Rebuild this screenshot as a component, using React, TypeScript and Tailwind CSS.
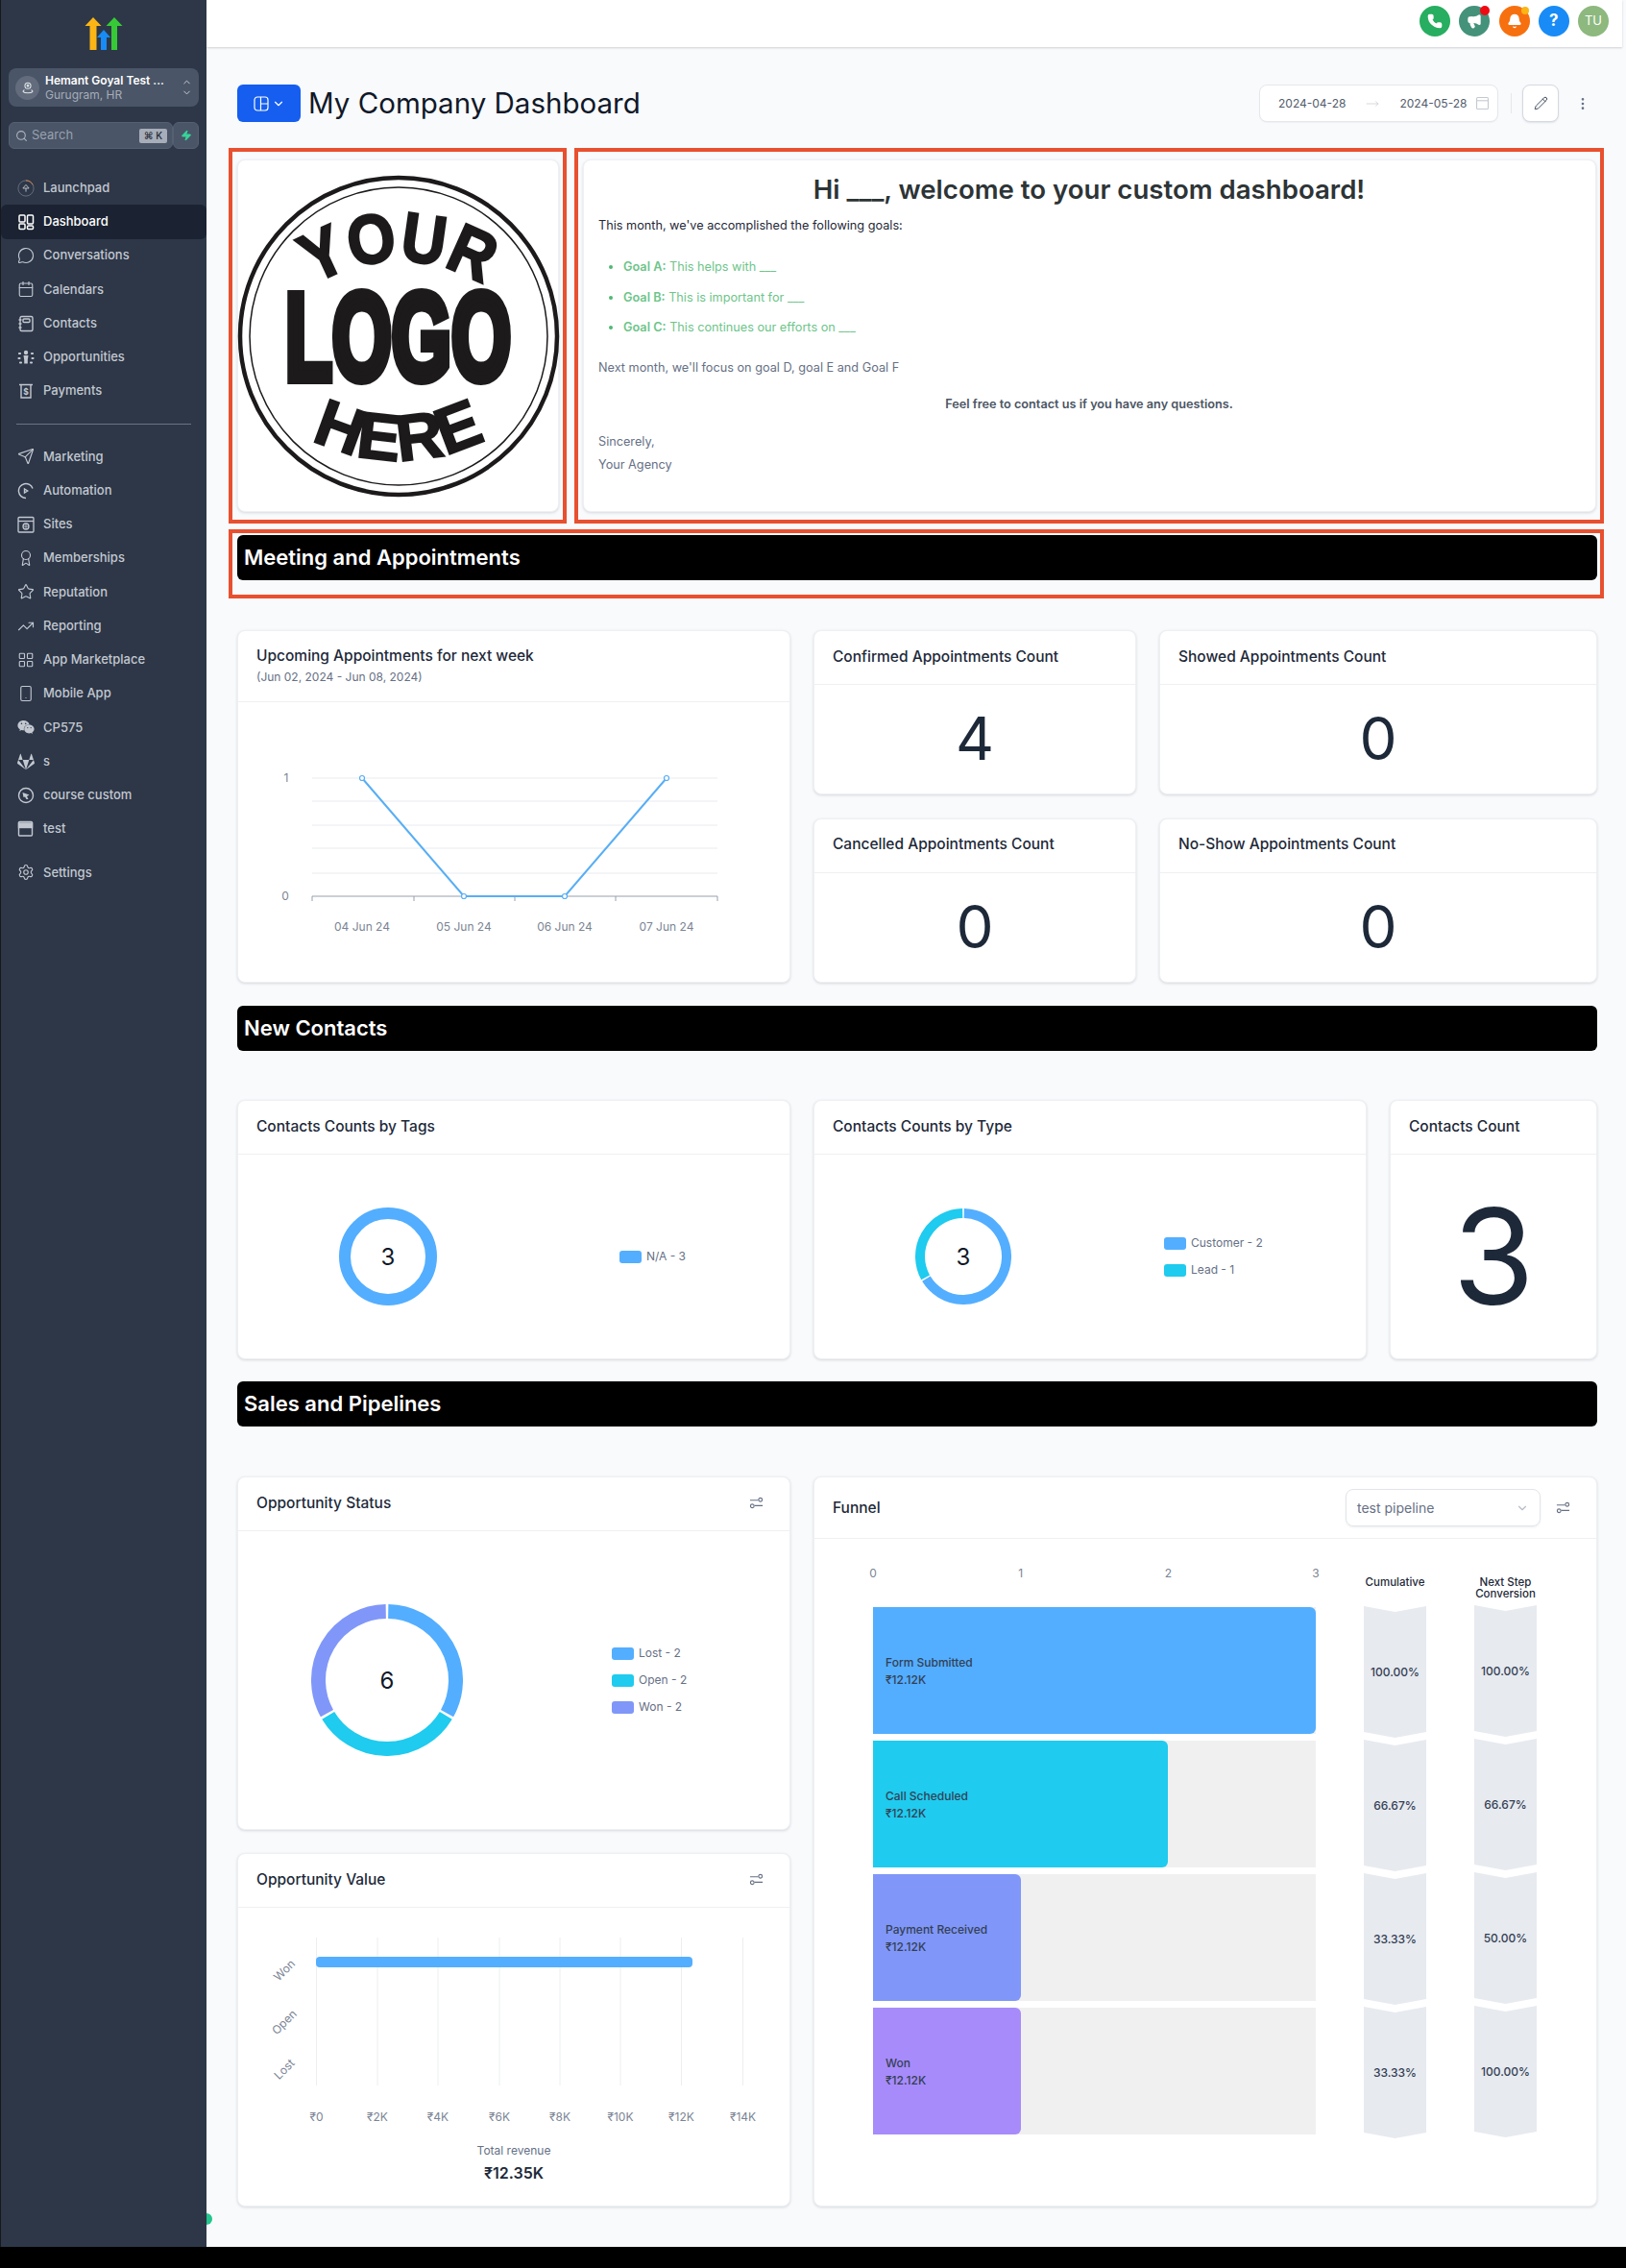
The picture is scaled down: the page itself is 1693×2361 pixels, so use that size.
import React from "react";
import {
  Bell,
  Calendar,
  ChevronDown,
  ChevronUp,
  LayoutGrid,
  MessageCircle,
  MoreVertical,
  Pencil,
  Phone,
  Search,
  Send,
  Settings,
  Smartphone,
  Star,
  TrendingUp,
  Award,
  Megaphone,
  MoveRight,
  Zap,
} from "lucide-react";
import { FaGitlab, FaWeixin } from "react-icons/fa";

const ic = "w-[18px] h-[18px]";

// hand drawn sidebar icons, the ones lucide has no close match for
const LaunchIcon = () => (
  <svg viewBox="0 0 20 20" className="w-5 h-5" fill="none" strokeWidth="1">
    <circle cx="10" cy="10" r="9" stroke="#6b7280" />
    <path d="M10 1a9 9 0 0 1 8 5" stroke="#e08a4a" />
    <path d="M10 14v-4M6.5 10 10 6l3.5 4z" stroke="#c5cad3" />
  </svg>
);
const DashIcon = () => (
  <svg viewBox="0 0 18 18" className={ic} fill="none" stroke="currentColor" strokeWidth="1.5">
    <rect x="2" y="2" width="6" height="7" rx="1" />
    <rect x="10.5" y="2" width="6" height="9" rx="1" />
    <rect x="2" y="11" width="6" height="5.5" rx="1" />
    <rect x="10.5" y="13" width="6" height="3.5" rx="1" />
  </svg>
);
const ContactIcon = () => (
  <svg viewBox="0 0 18 18" className={ic} fill="none" stroke="currentColor" strokeWidth="1.4">
    <rect x="3" y="1.5" width="13" height="15" rx="1.5" />
    <rect x="6" y="4" width="7" height="3.5" rx="1" />
    <path d="M1.5 5h3M1.5 9h3M1.5 13h3" />
  </svg>
);
const OppIcon = () => (
  <svg viewBox="0 0 18 18" className={ic} fill="currentColor">
    <circle cx="9" cy="4" r="2.2" />
    <path d="M6.5 7h5l-.7 4.5v4H7.200v-4z" />
    <rect x="1" y="4" width="3" height="2" rx=".8" />
    <rect x="14" y="4" width="3" height="2" rx=".8" />
    <rect x="0.500" y="9" width="3" height="2" rx=".8" />
    <rect x="14.500" y="9" width="3" height="2" rx=".8" />
    <rect x="2" y="13.500" width="3" height="2" rx=".8" />
    <rect x="13" y="13.500" width="3" height="2" rx=".8" />
  </svg>
);
const PayIcon = () => (
  <svg viewBox="0 0 18 18" className={ic} fill="none" stroke="currentColor" strokeWidth="1.4">
    <path d="M2 2.500h14M4 2.500v13.500h10V2.500" />
    <text x="9" y="13" textAnchor="middle" fontSize="8.500" fontWeight="700" fill="currentColor" stroke="none">
      $
    </text>
  </svg>
);
const AutoIcon = () => (
  <svg viewBox="0 0 18 18" className={ic} fill="none" stroke="currentColor" strokeWidth="1.4">
    <path d="M16 6.500A7.500 7.500 0 1 0 9 16.500" />
    <path d="M7.500 7v4l3.200-2z" />
  </svg>
);
const SiteIcon = () => (
  <svg viewBox="0 0 18 18" className={ic} fill="none" stroke="currentColor" strokeWidth="1.3">
    <rect x="1" y="1.500" width="16" height="15.500" rx="1" />
    <path d="M1 5.500h16" />
    <circle cx="9" cy="11" r="3" />
    <path d="M6 11h6M9 8v6" strokeWidth=".8" />
  </svg>
);
const CourseIcon = () => (
  <svg viewBox="0 0 18 18" className={ic} fill="none" stroke="currentColor" strokeWidth="1.4">
    <circle cx="9" cy="9" r="7.500" />
    <path d="M5.500 6 12.500 8.500 10 10l1.500 3L9.500 13 8 10.500 6.500 11z" fill="currentColor" stroke="none" />
  </svg>
);
const TestIcon = () => (
  <svg viewBox="0 0 18 18" className={ic} fill="none" stroke="currentColor" strokeWidth="1.4">
    <rect x="1.500" y="1.500" width="14" height="14.500" rx="1" />
    <rect x="1.500" y="3" width="14" height="4.500" fill="currentColor" />
  </svg>
);

const topNav: [string, React.ReactNode][] = [
  ["Launchpad", <LaunchIcon />],
  ["Dashboard", <DashIcon />],
  ["Conversations", <MessageCircle className={ic} strokeWidth={1.5} />],
  ["Calendars", <Calendar className={ic} strokeWidth={1.5} />],
  ["Contacts", <ContactIcon />],
  ["Opportunities", <OppIcon />],
  ["Payments", <PayIcon />],
];
const lowerNav: [string, React.ReactNode][] = [
  ["Marketing", <Send className={ic} strokeWidth={1.5} />],
  ["Automation", <AutoIcon />],
  ["Sites", <SiteIcon />],
  ["Memberships", <Award className={ic} strokeWidth={1.5} />],
  ["Reputation", <Star className={ic} strokeWidth={1.5} />],
  ["Reporting", <TrendingUp className={ic} strokeWidth={1.5} />],
  ["App Marketplace", <LayoutGrid className={ic} strokeWidth={1.5} />],
  ["Mobile App", <Smartphone className={ic} strokeWidth={1.5} />],
  ["CP575", <FaWeixin className={ic} />],
  ["s", <FaGitlab className={ic} />],
  ["course custom", <CourseIcon />],
  ["test", <TestIcon />],
];

const NavItem = ({ label, icon }: { label: string; icon: React.ReactNode }) => {
  const active = label === "Dashboard";
  return (
    <div
      className={`h-[35.25px] flex items-center pl-[17px] gap-[9px] text-[13px] font-medium rounded-md ${
        active ? "bg-[#1b2332] text-white" : "text-[#c3c8d0]"
      }`}
    >
      <span className="w-[18px] flex justify-center">{icon}</span>
      {label}
    </div>
  );
};

const Sidebar = () => (
  <aside className="relative w-[215px] shrink-0 bg-[#2d3748] border-l border-[#16181d] flex flex-col">
    <div className="h-[71px] flex justify-center pt-[18px]">
      <svg viewBox="0 0 40 34" className="w-[40px] h-[34px]">
        <path d="M9 0l8.500 9H12.500v25h-7V9H.5z" fill="#fbb515" />
        <path d="M31 0l8.500 9H34v25h-6V9h-5.500z" fill="#37ca37" />
        <path d="M20 13l7 8h-4v13h-6V21h-4z" fill="#188bf6" />
      </svg>
    </div>
    <div className="mx-2 h-[40px] rounded-lg bg-[#4a5567] flex items-center pl-[7px]">
      <div className="w-[25px] h-[25px] rounded-full bg-[#626c7c] flex items-center justify-center">
        <svg viewBox="0 0 16 16" className="w-[14px] h-[14px]" fill="none" stroke="#e5e7eb" strokeWidth="1.200">
          <circle cx="8" cy="6" r="3.500" />
          <circle cx="8" cy="6" r="1" />
          <path d="M4 11c-3 1.500-2 3.500 4 3.500s7-2 4-3.500" />
        </svg>
      </div>
      <div className="ml-[6px] flex-1 min-w-0">
        <div className="text-[12px] leading-[15px] font-semibold text-white">Hemant Goyal Test ...</div>
        <div className="text-[12px] leading-[15px] text-[#a6adb9]">Gurugram, HR</div>
      </div>
      <div className="mr-[7px] flex flex-col text-[#d1d5db]">
        <ChevronUp className="w-[11px] h-[11px]" />
        <ChevronDown className="w-[11px] h-[11px]" />
      </div>
    </div>
    <div className="mx-2 mt-4 h-[28px] flex">
      <div className="flex-1 rounded-md bg-[#4a5567] border border-[#556072] flex items-center pl-[6px]">
        <Search className="w-[13px] h-[13px] text-[#b0b6c0]" />
        <span className="ml-[4px] text-[13px] text-[#98a1ae] flex-1">Search</span>
        <span className="mr-[5px] h-[15px] w-[29px] rounded-[2px] bg-[#a7aeb9] text-[10px] font-medium text-[#1f2937] flex items-center justify-center">
          ⌘ K
        </span>
      </div>
      <div className="w-[27px] rounded-md bg-[#4a5567] border border-[#556072] flex items-center justify-center">
        <Zap className="w-[12px] h-[12px] text-[#37d399] fill-[#37d399]" />
      </div>
    </div>
    <nav className="mt-[23px] pr-0">
      {topNav.map(([label, icon]) => (
        <NavItem key={label} label={label} icon={icon} />
      ))}
    </nav>
    <div className="mx-4 mt-[16px] mb-[16px] h-px bg-[#6b7482]" />
    <nav>
      {lowerNav.map(([label, icon]) => (
        <NavItem key={label} label={label} icon={icon} />
      ))}
      <div className="mt-[10px]">
        <NavItem label="Settings" icon={<Settings className={ic} strokeWidth={1.5} />} />
      </div>
    </nav>
    <div className="absolute -right-[6px] bottom-[23px] w-[6px] h-[12px] rounded-r-full bg-[#22c58b]" />
  </aside>
);

const TopBar = () => (
  <div className="h-[49px] pb-[5px] mr-[4px] bg-white shadow-[0_1px_2px_rgba(16,24,40,0.18)] flex items-center justify-end pr-[14px] gap-[9.25px]">
    <div className="w-8 h-8 rounded-full bg-[#27ae60] flex items-center justify-center">
      <Phone className="w-4 h-4 text-white fill-white" />
    </div>
    <div className="relative w-8 h-8 rounded-full bg-[#44927a] flex items-center justify-center">
      <Megaphone className="w-4 h-4 text-white fill-white" />
      <span className="absolute right-0 top-0 w-[10px] h-[10px] rounded-full bg-[#ef0a12]" />
    </div>
    <div className="relative w-8 h-8 rounded-full bg-[#f7700f] flex items-center justify-center">
      <Bell className="w-4 h-4 text-white fill-white" />
      <span className="absolute right-[1px] top-[1px] w-[8px] h-[8px] rounded-full bg-[#fbb515]" />
    </div>
    <div className="w-8 h-8 rounded-full bg-[#188bf6] flex items-center justify-center text-white text-[17px] font-bold">?</div>
    <div className="w-8 h-8 rounded-full bg-[#8db87e] flex items-center justify-center text-white text-[13px]">TU</div>
  </div>
);

const TitleRow = () => (
  <div className="h-[39px] mt-[39px] flex items-center">
    <div className="w-[66px] h-[39px] rounded-md bg-[#155eef] flex items-center justify-center gap-[3px] text-white">
      <svg viewBox="0 0 16 16" className="w-4 h-4" fill="none" stroke="currentColor" strokeWidth="1.200">
        <rect x="1" y="1" width="14" height="14" rx="3" />
        <path d="M7.500 1v14M7.500 8H15" />
      </svg>
      <ChevronDown className="w-[14px] h-[14px]" />
    </div>
    <h1 className="ml-2 text-[29.5px] font-normal text-[#101828]">My Company Dashboard</h1>
    <div className="ml-auto w-[249px] h-[39px] rounded-lg bg-white border border-[#e5e7eb] shadow-[0_1px_1px_rgba(16,24,40,0.04)] flex items-center pl-[19px] text-[12px] whitespace-nowrap text-[#525c6b]">
      <span>2024-04-28</span>
      <MoveRight className="w-[14px] h-[14px] mx-[21px] text-[#c4c9d0]" strokeWidth={1.200} />
      <span>2024-05-28</span>
      <svg viewBox="0 0 12 12" className="ml-[9px] w-[13px] h-[13px]" fill="none" stroke="#c4c9d0">
        <rect x=".5" y=".5" width="11" height="11" rx="1" />
        <path d="M.5 3.500h11" />
      </svg>
    </div>
    <div className="ml-[13px] h-[21px] w-px bg-[#e5e7eb]" />
    <div className="ml-[11px] w-[38px] h-[39px] rounded-lg bg-white border border-[#d5d9e0] shadow-[0_1px_2px_rgba(16,24,40,0.1)] flex items-center justify-center">
      <Pencil className="w-[15px] h-[15px] text-[#344054]" strokeWidth={1.500} />
    </div>
    <MoreVertical className="ml-[17px] mr-[7px] w-[16px] h-[16px] text-[#667085]" />
  </div>
);

const LogoArt = () => (
  <svg viewBox="247 181 336 336" className="w-[336px] h-[336px]" fontFamily="Liberation Sans, sans-serif" fontWeight="700" fill="#1c1a1a">
    <defs>
      <path id="yourArc" d="M289 329A165 165 0 0 1 541 329" />
      <path id="hereArc" d="M 285 430 A 200 200 0 0 0 545 430" />
    </defs>
    <circle cx="415" cy="349" r="165" fill="none" stroke="#1c1a1a" strokeWidth="4.500" />
    <circle cx="415" cy="349" r="155" fill="none" stroke="#1c1a1a" strokeWidth="1.500" />
    <text fontSize="72" stroke="#1c1a1a" strokeWidth="2.500">
      <textPath href="#yourArc" startOffset="50%" textAnchor="middle" textLength="185" lengthAdjust="spacingAndGlyphs">
        YOUR
      </textPath>
    </text>
    <text x="297" y="394" fontSize="128" textLength="235" lengthAdjust="spacingAndGlyphs" stroke="#1c1a1a" strokeWidth="10">
      LOGO
    </text>
    <text fontSize="68" stroke="#1c1a1a" strokeWidth="2">
      <textPath href="#hereArc" startOffset="50%" textAnchor="middle">
        HERE
      </textPath>
    </text>
  </svg>
);

const Card = ({ className = "", children }: { className?: string; children: React.ReactNode }) => (
  <div className={`bg-white rounded-lg border border-[#eef0f3] shadow-[0_1px_3px_rgba(16,24,40,0.14)] flex flex-col ${className}`}>{children}</div>
);

const Filter = () => (
  <svg viewBox="0 0 16 16" className="w-[15px] h-[15px] text-[#667085]" fill="none" stroke="currentColor" strokeWidth="1.200">
    <path d="M1 5h9M6 11h9" />
    <circle cx="12.500" cy="4.500" r="2" />
    <circle cx="3.500" cy="11.500" r="2" />
  </svg>
);

const CardHeader = ({ title, filter, sub }: { title: string; filter?: boolean; sub?: string }) => (
  <div className={`${sub ? "h-[74px]" : "h-[56px]"} shrink-0 border-b border-[#eef0f3] pl-[19px] pr-[27px] pb-[2px] flex items-center`}>
    <div className="flex-1">
      <div className="text-[15.5px] leading-[24px] font-medium text-[#1d2939]">{title}</div>
      {sub && <div className="text-[12px] leading-[20px] text-[#667085]">{sub}</div>}
    </div>
    {filter && <Filter />}
  </div>
);

const CountCard = ({ title, value }: { title: string; value: string }) => (
  <Card className="h-[171px]">
    <CardHeader title={title} />
    <div className="flex-1 flex items-center justify-center pb-[2px] text-[62px] text-[#1d2939]">{value}</div>
  </Card>
);

const Banner = ({ children }: { children: string }) => (
  <div className="h-[47px] bg-black rounded-md pl-[7px] flex items-center text-[22px] font-semibold text-white">{children}</div>
);

type Segment = { color: string; from: number; to: number };

const pt = (c: number, r: number, deg: number) => {
  const a = ((deg - 90) * Math.PI) / 180;
  return `${(c + r * Math.cos(a)).toFixed(2)} ${(c + r * Math.sin(a)).toFixed(2)}`;
};

const Donut = ({ size, thickness, segments, value, fontSize }: { size: number; thickness: number; segments: Segment[]; value: string; fontSize: number }) => {
  const c = size / 2;
  const r = c - thickness / 2;
  return (
    <svg viewBox={`0 0 ${size} ${size}`} width={size} height={size} className="shrink-0">
      {segments.map((s) =>
        s.to - s.from >= 360 ? (
          <circle key={s.color} cx={c} cy={c} r={r} fill="none" stroke={s.color} strokeWidth={thickness} />
        ) : (
          <path
            key={s.color}
            d={`M${pt(c, r, s.from)}A${r} ${r} 0 ${s.to - s.from > 180 ? 1 : 0} 1 ${pt(c, r, s.to)}`}
            fill="none"
            stroke={s.color}
            strokeWidth={thickness}
          />
        )
      )}
      <text x={c} y={c} dy=".36em" textAnchor="middle" fontSize={fontSize} fill="#101828">
        {value}
      </text>
    </svg>
  );
};

const Legend = ({ items, className }: { items: [string, string][]; className: string }) => (
  <div className={`flex flex-col gap-[15px] ${className}`}>
    {items.map(([color, label]) => (
      <div key={label} className="flex items-center h-[13px] gap-[5px] text-[12px] text-[#667085]">
        <span className="w-[23px] h-[13px] rounded-[3px]" style={{ background: color }} />
        {label}
      </div>
    ))}
  </div>
);

const LineChart = () => (
  <svg viewBox="247 731 575 291" className="w-[575px] h-[291px]" fontSize="12" fill="#7b8494">
    {[810, 834, 859, 883, 909].map((y) => (
      <line key={y} x1="324" x2="746" y1={y} y2={y} stroke="#e9ebef" />
    ))}
    <line x1="324" x2="746" y1="933" y2="933" stroke="#98a0ab" strokeWidth="1.200" />
    {[324, 430, 535, 640, 746].map((x) => (
      <line key={x} x1={x} x2={x} y1="933" y2="938" stroke="#98a0ab" />
    ))}
    <text x="297" y="814" textAnchor="middle">1</text>
    <text x="296" y="937" textAnchor="middle">0</text>
    <polyline points="376,810 482,933 587,933 693,810" fill="none" stroke="#58aef5" strokeWidth="2" />
    {[[376, 810], [482, 933], [587, 933], [693, 810]].map(([x, y]) => (
      <circle key={x} cx={x} cy={y} r="2.500" fill="#fff" stroke="#58aef5" strokeWidth="1.200" />
    ))}
    {[[376, "04 Jun 24"], [482, "05 Jun 24"], [587, "06 Jun 24"], [693, "07 Jun 24"]].map(([x, t]) => (
      <text key={t} x={x} y="969" textAnchor="middle">{t}</text>
    ))}
  </svg>
);

const RevenueChart = () => (
  <svg viewBox="247 1985 575 240" className="w-[575px] h-[240px]" fontSize="12" fill="#7b8494">
    {[328.5, 392, 455, 519, 582, 645, 708.5, 772.5].map((x) => (
      <line key={x} x1={x} x2={x} y1="2016" y2="2170" stroke="#eceef1" />
    ))}
    <rect x="328" y="2036" width="392" height="11" rx="4" fill="#53aeff" />
    {[["Won", 2050], ["Open", 2104], ["Lost", 2153]].map(([t, y]) => (
      <text key={t} x="295" y={y} dy=".35em" textAnchor="middle" transform={`rotate(-45 295 ${y})`}>{t}</text>
    ))}
    {["₹0", "₹2K", "₹4K", "₹6K", "₹8K", "₹10K", "₹12K", "₹14K"].map((t, i) => (
      <text key={t} x={[328.5, 392, 455, 519, 582, 645, 708.5, 772.5][i]} y="2207" textAnchor="middle">{t}</text>
    ))}
  </svg>
);

const stages = [
  { label: "Form Submitted", bar: "w-full bg-[#53aeff]", cum: "100.00%", next: "100.00%" },
  { label: "Call Scheduled", bar: "w-[307px] bg-[#1fcbee]", cum: "66.67%", next: "66.67%" },
  { label: "Payment Received", bar: "w-[154px] bg-[#8097f9]", cum: "33.33%", next: "50.00%" },
  { label: "Won", bar: "w-[154px] bg-[#a78bfa]", cum: "33.33%", next: "100.00%" },
];

const Chevron = ({ value }: { value: string }) => (
  <div className="h-[138px] w-[65px] bg-[#e7eaef] [clip-path:polygon(0_0,50%_6px,100%_0,100%_131px,50%_137px,0_131px)] flex items-center justify-center text-[12px] font-medium text-[#344054]">
    {value}
  </div>
);

const FunnelCard = () => (
  <Card className="flex-1 h-[760px]">
    <div className="h-[64px] shrink-0 border-b border-[#eef0f3] pl-[19px] pr-[27px] flex items-center">
      <div className="flex-1 text-[15.5px] font-medium text-[#1d2939]">Funnel</div>
      <div className="w-[203px] h-[39px] rounded-lg border border-[#e2e5ea] shadow-[0_1px_2px_rgba(16,24,40,0.08)] flex items-center px-[11px] text-[14px] text-[#667085]">
        <span className="flex-1">test pipeline</span>
        <ChevronDown className="w-[14px] h-[14px] text-[#b6bcc6]" />
      </div>
      <div className="ml-[16px]">
        <Filter />
      </div>
    </div>
    <div className="flex pl-[61px] pt-[28px]">
      <div className="w-[461px]">
        <div className="flex justify-between -mx-[4px] h-[16px] text-[12px] leading-[16px] text-[#7b8494]">
          {[0, 1, 2, 3].map((n) => (
            <span key={n} className="w-[8px] text-center">{n}</span>
          ))}
        </div>
        <div className="mt-[27px] flex flex-col gap-[7px]">
          {stages.map((s) => (
            <div key={s.label} className="h-[132px] bg-[#f0f0f0]">
              <div className={`h-full rounded-r-md pl-[13px] pt-[2px] flex flex-col justify-center text-[12px] leading-[18px] font-medium text-[#344054] ${s.bar}`}>
                <span>{s.label}</span>
                <span>₹12.12K</span>
              </div>
            </div>
          ))}
        </div>
      </div>
      <div className="ml-[50px] w-[65px]">
        <div className="h-[42px] pt-[11px] text-center text-[11.500px] leading-[12px] font-medium text-[#1d2939]">Cumulative</div>
        <div className="flex flex-col gap-[1px]">
          {stages.map((s) => (
            <Chevron key={s.label} value={s.cum} />
          ))}
        </div>
      </div>
      <div className="ml-[50px] w-[65px]">
        <div className="h-[41px] pt-[11px] text-center text-[11.500px] leading-[12px] font-medium text-[#1d2939] whitespace-nowrap">
          Next Step
          <br />
          Conversion
        </div>
        <div className="flex flex-col gap-[1px]">
          {stages.map((s) => (
            <Chevron key={s.label} value={s.next} />
          ))}
        </div>
      </div>
    </div>
  </Card>
);

const WelcomeCard = () => (
  <Card className="h-[367px] pl-[15px] pr-4 text-[12.7px] text-[#667085]">
    <h2 className="mt-[12px] text-center text-[27.6px] leading-[36px] font-semibold text-[#2d3436]">Hi ___, welcome to your custom dashboard!</h2>
    <p className="mt-[10px] leading-[20px] text-[#1f2937]">This month, we've accomplished the following goals:</p>
    <ul className="mt-[23px] pl-[26px] list-disc flex flex-col gap-[11.500px] leading-[20px] text-[#6ec58a] marker:text-[#4fb873]">
      <li><b className="font-semibold">Goal A:</b> This helps with ___</li>
      <li><b className="font-semibold">Goal B:</b> This is important for ___</li>
      <li><b className="font-semibold">Goal C:</b> This continues our efforts on ___</li>
    </ul>
    <p className="mt-[22px] leading-[20px]">Next month, we'll focus on goal D, goal E and Goal F</p>
    <p className="mt-[18px] leading-[20px] text-center font-semibold text-[#4b5563]">Feel free to contact us if you have any questions.</p>
    <p className="mt-[19px] leading-[20px]">Sincerely,</p>
    <p className="mt-[3.5px] leading-[20px]">Your Agency</p>
  </Card>
);

export default function App() {
  return (
    <div className="w-[1693px] h-[2361px] flex flex-col bg-[#f8fafc] overflow-hidden [font-family:Inter,sans-serif]">
      <div className="h-[2339px] flex">
        <Sidebar />
        <main className="flex-1 min-w-0">
          <TopBar />
          <div className="pl-[32px] w-[1448px]">
            <TitleRow />
            <div className="mt-[27px] -ml-[9px] w-[1432px] flex gap-[8px]">
              <div className="w-[352px] h-[391px] border-4 border-[#e8502f] pl-[5px] pr-[4px] pt-[8px]">
                <Card className="h-[367px] items-center justify-center">
                  <LogoArt />
                </Card>
              </div>
              <div className="flex-1 h-[391px] border-4 border-[#e8502f] pl-[5px] pr-[4px] pt-[8px]">
                <WelcomeCard />
              </div>
            </div>
            <div className="mt-[6px] -ml-[9px] w-[1432px] h-[72px] border-4 border-[#e8502f] pl-[5px] pr-[3px] pt-[2px]">
              <Banner>Meeting and Appointments</Banner>
            </div>
            <div className="mt-[33px] flex gap-6">
              <Card className="w-[576px] h-[367px]">
                <CardHeader title="Upcoming Appointments for next week" sub="(Jun 02, 2024 - Jun 08, 2024)" />
                <LineChart />
              </Card>
              <div className="flex-1 grid grid-cols-[336px_1fr] gap-6">
                <CountCard title="Confirmed Appointments Count" value="4" />
                <CountCard title="Showed Appointments Count" value="0" />
                <CountCard title="Cancelled Appointments Count" value="0" />
                <CountCard title="No-Show Appointments Count" value="0" />
              </div>
            </div>
            <div className="mt-[24px]">
              <Banner>New Contacts</Banner>
            </div>
            <div className="mt-[51px] flex gap-6 h-[270px]">
              <Card className="w-[576px]">
                <CardHeader title="Contacts Counts by Tags" />
                <div className="flex-1 flex items-center pl-[105px]">
                  <Donut size={102} thickness={12} value="3" fontSize={24} segments={[{ color: "#53aeff", from: 0, to: 360 }]} />
                  <Legend className="ml-[190px]" items={[["#53aeff", "N/A - 3"]]} />
                </div>
              </Card>
              <Card className="w-[576px]">
                <CardHeader title="Contacts Counts by Type" />
                <div className="flex-1 flex items-center pl-[105px]">
                  <Donut
                    size={100}
                    thickness={10}
                    value="3"
                    fontSize={24}
                    segments={[
                      { color: "#53aeff", from: 1, to: 239 },
                      { color: "#1fcbee", from: 241, to: 359 },
                    ]}
                  />
                  <Legend className="ml-[159px]" items={[["#53aeff", "Customer - 2"], ["#1fcbee", "Lead - 1"]]} />
                </div>
              </Card>
              <Card className="flex-1">
                <CardHeader title="Contacts Count" />
                <div className="flex-1 flex items-center justify-center text-[138px] leading-none text-[#1d2939]">3</div>
              </Card>
            </div>
            <div className="mt-[23px]">
              <Banner>Sales and Pipelines</Banner>
            </div>
            <div className="mt-[52px] flex gap-6">
              <div className="w-[576px] flex flex-col gap-6">
                <Card className="h-[368px]">
                  <CardHeader title="Opportunity Status" filter />
                  <div className="flex-1 flex items-center pl-[76px]">
                    <Donut
                      size={158}
                      thickness={15}
                      value="6"
                      fontSize={24}
                      segments={[
                        { color: "#53aeff", from: 1, to: 119 },
                        { color: "#1fcbee", from: 121, to: 239 },
                        { color: "#8097f9", from: 241, to: 359 },
                      ]}
                    />
                    <Legend className="ml-[155px]" items={[["#53aeff", "Lost - 2"], ["#1fcbee", "Open - 2"], ["#8097f9", "Won - 2"]]} />
                  </div>
                </Card>
                <Card className="h-[368px]">
                  <CardHeader title="Opportunity Value" filter />
                  <RevenueChart />
                  <div className="text-center text-[12px] leading-[20px] text-[#667085] mt-[3px]">Total revenue</div>
                  <div className="text-center text-[16px] leading-[24px] font-semibold text-[#1d2939] mt-[1px]">₹12.35K</div>
                </Card>
              </div>
              <FunnelCard />
            </div>
          </div>
        </main>
      </div>
      <div className="flex-1 bg-black" />
    </div>
  );
}
